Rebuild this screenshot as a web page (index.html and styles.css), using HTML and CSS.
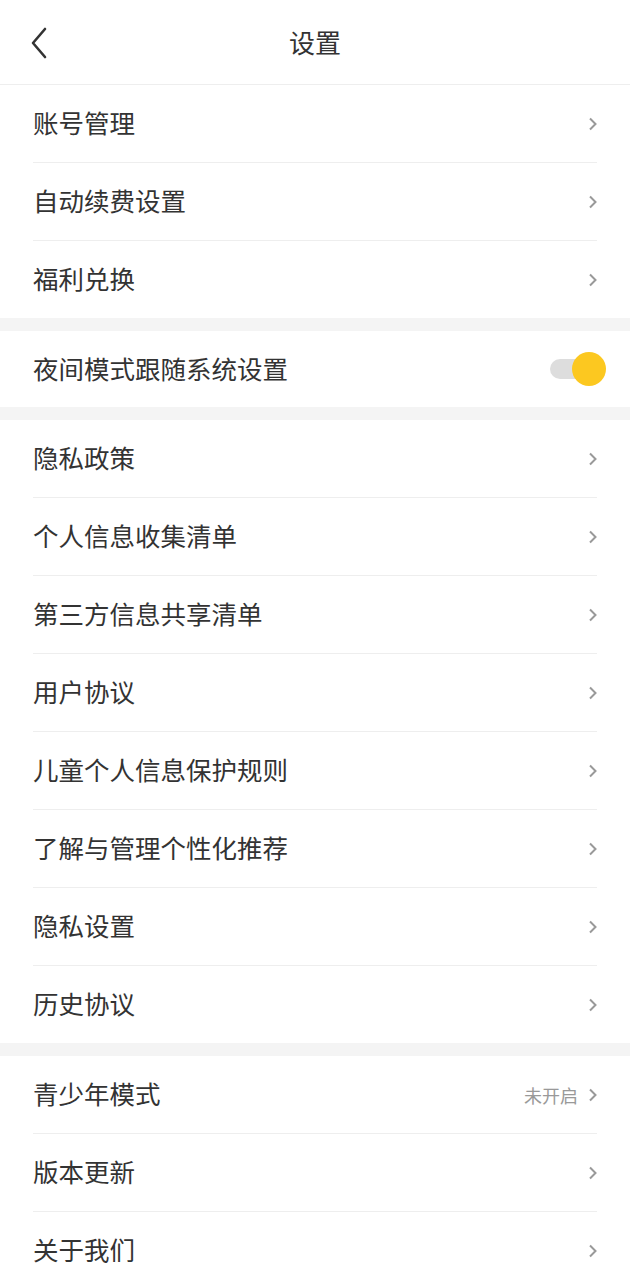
FILE: index.html
```html
<!DOCTYPE html>
<html lang="zh-CN">
<head>
    <meta charset="UTF-8">
    <meta name="viewport" content="width=device-width, initial-scale=1.0">
    <title>设置</title>
    <link rel="stylesheet" href="styles.css">
</head>
<body>
    <div class="page">
        <div class="header">
            <a class="back">
                <svg width="18" height="32" viewBox="0 0 18 32"><path d="M15 2L3 16l12 14" fill="none" stroke="#333" stroke-width="2.6" stroke-linecap="round" stroke-linejoin="round"/></svg>
            </a>
            <div class="title">设置</div>
        </div>

        <div class="group">
            <div class="row"><span class="label">账号管理</span><span class="arrow"><svg width="10" height="14" viewBox="0 0 10 14"><path d="M2 1.5l5.5 5.5L2 12.5" fill="none" stroke="#999" stroke-width="2"/></svg></span></div>
            <div class="row"><span class="label">自动续费设置</span><span class="arrow"><svg width="10" height="14" viewBox="0 0 10 14"><path d="M2 1.5l5.5 5.5L2 12.5" fill="none" stroke="#999" stroke-width="2"/></svg></span></div>
            <div class="row"><span class="label">福利兑换</span><span class="arrow"><svg width="10" height="14" viewBox="0 0 10 14"><path d="M2 1.5l5.5 5.5L2 12.5" fill="none" stroke="#999" stroke-width="2"/></svg></span></div>
        </div>

        <div class="group">
            <div class="row row-switch">
                <span class="label">夜间模式跟随系统设置</span>
                <span class="switch on"><span class="knob"></span></span>
            </div>
        </div>

        <div class="group">
            <div class="row"><span class="label">隐私政策</span><span class="arrow"><svg width="10" height="14" viewBox="0 0 10 14"><path d="M2 1.5l5.5 5.5L2 12.5" fill="none" stroke="#999" stroke-width="2"/></svg></span></div>
            <div class="row"><span class="label">个人信息收集清单</span><span class="arrow"><svg width="10" height="14" viewBox="0 0 10 14"><path d="M2 1.5l5.5 5.5L2 12.5" fill="none" stroke="#999" stroke-width="2"/></svg></span></div>
            <div class="row"><span class="label">第三方信息共享清单</span><span class="arrow"><svg width="10" height="14" viewBox="0 0 10 14"><path d="M2 1.5l5.5 5.5L2 12.5" fill="none" stroke="#999" stroke-width="2"/></svg></span></div>
            <div class="row"><span class="label">用户协议</span><span class="arrow"><svg width="10" height="14" viewBox="0 0 10 14"><path d="M2 1.5l5.5 5.5L2 12.5" fill="none" stroke="#999" stroke-width="2"/></svg></span></div>
            <div class="row"><span class="label">儿童个人信息保护规则</span><span class="arrow"><svg width="10" height="14" viewBox="0 0 10 14"><path d="M2 1.5l5.5 5.5L2 12.5" fill="none" stroke="#999" stroke-width="2"/></svg></span></div>
            <div class="row"><span class="label">了解与管理个性化推荐</span><span class="arrow"><svg width="10" height="14" viewBox="0 0 10 14"><path d="M2 1.5l5.5 5.5L2 12.5" fill="none" stroke="#999" stroke-width="2"/></svg></span></div>
            <div class="row"><span class="label">隐私设置</span><span class="arrow"><svg width="10" height="14" viewBox="0 0 10 14"><path d="M2 1.5l5.5 5.5L2 12.5" fill="none" stroke="#999" stroke-width="2"/></svg></span></div>
            <div class="row"><span class="label">历史协议</span><span class="arrow"><svg width="10" height="14" viewBox="0 0 10 14"><path d="M2 1.5l5.5 5.5L2 12.5" fill="none" stroke="#999" stroke-width="2"/></svg></span></div>
        </div>

        <div class="group">
            <div class="row"><span class="label">青少年模式</span><span class="extra">未开启</span><span class="arrow"><svg width="10" height="14" viewBox="0 0 10 14"><path d="M2 1.5l5.5 5.5L2 12.5" fill="none" stroke="#999" stroke-width="2"/></svg></span></div>
            <div class="row"><span class="label">版本更新</span><span class="arrow"><svg width="10" height="14" viewBox="0 0 10 14"><path d="M2 1.5l5.5 5.5L2 12.5" fill="none" stroke="#999" stroke-width="2"/></svg></span></div>
            <div class="row"><span class="label">关于我们</span><span class="arrow"><svg width="10" height="14" viewBox="0 0 10 14"><path d="M2 1.5l5.5 5.5L2 12.5" fill="none" stroke="#999" stroke-width="2"/></svg></span></div>
        </div>
    </div>
</body>
</html>
```

FILE: styles.css
```css
body {
    margin: 0;
    font-family: "Noto Sans CJK SC", "Noto Sans", sans-serif;
    background-color: #f4f4f4;
    color: #333;
}

.page {
    width: 630px;
}

.header {
    position: relative;
    height: 84px;
    background-color: #fff;
    border-bottom: 1px solid #eee;
    display: flex;
    justify-content: center;
    align-items: center;
}

.back {
    position: absolute;
    left: 30px;
    top: 27px;
    display: flex;
}

.title {
    font-size: 26px;
    color: #333;
    padding-bottom: 2px;
}

.group {
    background-color: #fff;
    padding: 0 33px;
    margin-bottom: 13px;
}

.row {
    height: 77px;
    display: flex;
    align-items: center;
    border-bottom: 1px solid #eee;
}

.row:last-child {
    border-bottom: none;
}

.row-switch {
    height: 76px;
}

.label {
    flex: 1;
    font-size: 25.5px;
    line-height: 30px;
    padding-bottom: 3px;
    color: #333;
}

.extra {
    font-size: 18px;
    color: #999;
    margin-right: 10px;
}

.arrow {
    display: flex;
    margin-right: -1px;
}

.switch {
    position: relative;
    width: 56px;
    height: 34px;
    margin-right: -9px;
}

.switch::before {
    content: "";
    position: absolute;
    left: 0;
    top: 7px;
    width: 48px;
    height: 20px;
    border-radius: 10px;
    background-color: #ddd;
}

.knob {
    position: absolute;
    right: 0;
    top: 0;
    width: 34px;
    height: 34px;
    border-radius: 50%;
    background-color: #fcc820;
}
```
